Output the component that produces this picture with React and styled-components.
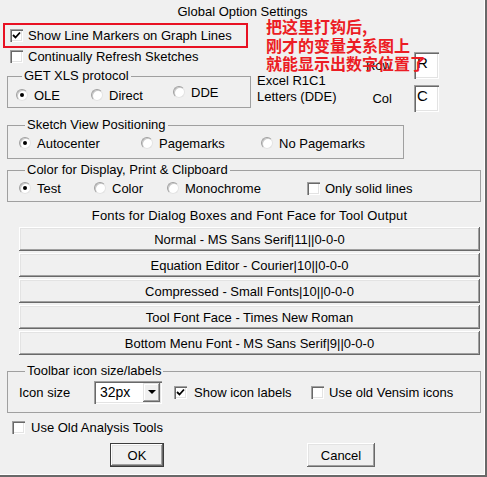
import React from "react";
import styled, { createGlobalStyle } from "styled-components";

const GlobalStyle = createGlobalStyle`
  html, body {
    margin: 0;
    padding: 0;
    background: #f0f0f0;
  }
  body {
    font-family: "Liberation Sans", Arial, sans-serif;
    font-size: 13px;
    color: #000;
  }
`;

const Window = styled.div`
  position: relative;
  box-sizing: border-box;
  width: 487px;
  height: 477px;
  background: #f0f0f0;
  border-right: 2px solid #696969;
  border-bottom: 2px solid #696969;
  box-shadow: inset -1px -1px 0 #fff;
  display: flex;
  flex-direction: column;
`;

const Title = styled.div`
  height: 23px;
  line-height: 24px;
  text-align: center;
`;

const TopSection = styled.div`
  display: flex;
  align-items: flex-start;
`;

const LeftCol = styled.div`
  width: 250px;
  display: flex;
  flex-direction: column;
`;

const Highlight = styled.div`
  box-sizing: border-box;
  margin-left: 3px;
  width: 245px;
  height: 25px;
  border: 2px solid #e81123;
  display: flex;
  align-items: center;
`;

const CheckRow = styled.div`
  display: flex;
  align-items: center;
  gap: ${(p) => p.$gap ?? 5}px;
  height: ${(p) => p.$h ?? 16}px;
  margin-left: ${(p) => p.$x ?? 0}px;
  margin-top: ${(p) => p.$top ?? 0}px;
`;

const Box = styled.span`
  box-sizing: border-box;
  flex: none;
  width: 13px;
  height: 13px;
  background: #fff;
  box-shadow: inset 1px 1px 0 #a0a0a0, inset 2px 2px 0 #696969,
    inset -1px -1px 0 #fff, inset -2px -2px 0 #e3e3e3;
  display: flex;
  align-items: center;
  justify-content: center;
`;

const Circle = styled.span`
  position: relative;
  box-sizing: border-box;
  flex: none;
  width: 12px;
  height: 12px;
  border-radius: 50%;
  background: #fff;
  border: 1px solid;
  border-color: #a0a0a0 #e3e3e3 #e3e3e3 #a0a0a0;
  box-shadow: inset 1px 1px 0 #c8c8c8;

  &::after {
    content: "";
    display: ${(p) => (p.$on ? "block" : "none")};
    position: absolute;
    left: 3px;
    top: 3px;
    width: 4px;
    height: 4px;
    border-radius: 50%;
    background: #000;
  }
`;

const Group = styled.fieldset`
  box-sizing: border-box;
  margin: ${(p) => p.$top}px 0 0 7px;
  width: ${(p) => p.$w}px;
  min-width: 0;
  padding: 0 0 ${(p) => p.$pb ?? 0}px ${(p) => p.$pl ?? 11}px;
  border: 1px solid #a0a0a0;
`;

const Legend = styled.legend`
  margin-left: 6px;
  padding: 0 2px;
  line-height: 14px;
`;

const Options = styled.div`
  display: flex;
  align-items: center;
  height: ${(p) => p.$h}px;
`;

const Option = styled.div`
  flex: none;
  display: flex;
  align-items: center;
  gap: ${(p) => p.$gap ?? 6}px;
  width: ${(p) => (p.$w ? `${p.$w}px` : "auto")};
  margin-left: ${(p) => p.$ml ?? 0}px;
  margin-bottom: ${(p) => (p.$lift ? p.$lift * 2 : 0)}px;
  white-space: nowrap;
`;

const ExcelNote = styled.div`
  margin: 50px 0 0 7px;
  width: 100px;
  line-height: 16px;
`;

const RowColGrid = styled.div`
  display: grid;
  grid-template-columns: 35px 25px;
  column-gap: 22px;
  row-gap: 6px;
  align-items: center;
  margin-top: 29px;
`;

const FieldLabel = styled.span`
  justify-self: end;
`;

const Field = styled.div`
  box-sizing: border-box;
  width: 25px;
  height: 27px;
  padding: 2px 0 0 3px;
  background: #fff;
  font-size: 15px;
  box-shadow: inset 1px 1px 0 #a0a0a0, inset 2px 2px 0 #696969,
    inset -1px -1px 0 #fff, inset -2px -2px 0 #e3e3e3;
`;

const Note = styled.div`
  position: absolute;
  left: 266px;
  top: 17px;
  color: #ec1c24;
  font-family: "Noto Sans CJK SC", sans-serif;
  font-weight: 700;
  font-size: 16px;
  line-height: 18.5px;
  white-space: nowrap;
`;

const SectionHeading = styled.div`
  margin: 4px 0 0 19px;
  width: 461px;
  line-height: 20px;
  text-align: center;
  letter-spacing: 0.15px;
`;

const ButtonStack = styled.div`
  display: flex;
  flex-direction: column;
  gap: 2px;
  margin: 1px 0 0 19px;
  width: 461px;
`;

const Button = styled.button`
  box-sizing: border-box;
  height: 24px;
  width: ${(p) => (p.$w ? `${p.$w}px` : "100%")};
  margin-left: ${(p) => p.$ml ?? 0}px;
  padding: 0;
  background: #f0f0f0;
  color: #000;
  font-family: inherit;
  font-size: 13px;
  border: ${(p) => (p.$default ? "1px solid #3c3c3c" : "none")};
  box-shadow: inset -1px -1px 0 #696969, inset 1px 1px 0 #fff,
    inset -2px -2px 0 #a0a0a0, inset 2px 2px 0 #e3e3e3;
`;

const Select = styled.div`
  box-sizing: border-box;
  flex: none;
  display: flex;
  align-items: center;
  justify-content: space-between;
  width: 68px;
  height: 23px;
  padding: 2px 2px 2px 6px;
  background: #fff;
  font-size: 14px;
  box-shadow: inset 1px 1px 0 #a0a0a0, inset 2px 2px 0 #696969,
    inset -1px -1px 0 #fff, inset -2px -2px 0 #e3e3e3;
`;

const DropButton = styled.span`
  box-sizing: border-box;
  width: 17px;
  height: 19px;
  background: #f0f0f0;
  display: flex;
  align-items: center;
  justify-content: center;
  box-shadow: inset -1px -1px 0 #696969, inset 1px 1px 0 #e3e3e3,
    inset -2px -2px 0 #a0a0a0, inset 2px 2px 0 #fff;

  &::after {
    content: "";
    border-left: 4px solid transparent;
    border-right: 4px solid transparent;
    border-top: 4px solid #000;
  }
`;

const DialogButtons = styled.div`
  display: flex;
  margin-top: 8px;
`;

function Checkbox({ checked }) {
  return (
    <Box>
      {checked && (
        <svg width="9" height="9" viewBox="0 0 9 9">
          <polyline points="1,4 3.5,6.5 8,1.5" fill="none" stroke="#000" strokeWidth="1.8" />
        </svg>
      )}
    </Box>
  );
}

function RadioOption({ label, on, w, lift }) {
  return (
    <Option $w={w} $lift={lift}>
      <Circle $on={on} />
      <span>{label}</span>
    </Option>
  );
}

const fontButtons = [
  "Normal - MS Sans Serif|11||0-0-0",
  "Equation Editor - Courier|10||0-0-0",
  "Compressed - Small Fonts|10||0-0-0",
  "Tool Font Face - Times New Roman",
  "Bottom Menu Font - MS Sans Serif|9||0-0-0",
];

export default function App() {
  return (
    <>
      <GlobalStyle />
      <Window>
        <Title>Global Option Settings</Title>

        <TopSection>
          <LeftCol>
            <Highlight>
              <CheckRow $x={5}>
                <Checkbox checked />
                <span>Show Line Markers on Graph Lines</span>
              </CheckRow>
            </Highlight>
            <CheckRow $x={10}>
              <Checkbox />
              <span>Continually Refresh Sketches</span>
            </CheckRow>
            <Group $top={5} $w={244} $pl={8}>
              <Legend>GET XLS protocol</Legend>
              <Options $h={24}>
                <RadioOption label="OLE" on w={75} />
                <RadioOption label="Direct" w={82} />
                <RadioOption label="DDE" lift={3} />
              </Options>
            </Group>
          </LeftCol>
          <ExcelNote>
            Excel R1C1
            <br />
            Letters (DDE)
          </ExcelNote>
          <RowColGrid>
            <FieldLabel>Row</FieldLabel>
            <Field>R</Field>
            <FieldLabel>Col</FieldLabel>
            <Field>C</Field>
          </RowColGrid>
        </TopSection>

        <Group $top={6} $w={397} $pb={4}>
          <Legend>Sketch View Positioning</Legend>
          <Options $h={22}>
            <RadioOption label="Autocenter" on w={122} />
            <RadioOption label="Pagemarks" w={120} />
            <RadioOption label="No Pagemarks" />
          </Options>
        </Group>

        <Group $top={4} $w={474} $pb={2}>
          <Legend>Color for Display, Print &amp; Clipboard</Legend>
          <Options $h={22}>
            <RadioOption label="Test" on w={75} />
            <RadioOption label="Color" w={73} />
            <RadioOption label="Monochrome" w={140} />
            <Option $gap={5}>
              <Checkbox />
              <span>Only solid lines</span>
            </Option>
          </Options>
        </Group>

        <SectionHeading>Fonts for Dialog Boxes and Font Face for Tool Output</SectionHeading>
        <ButtonStack>
          {fontButtons.map((label) => (
            <Button key={label}>{label}</Button>
          ))}
        </ButtonStack>

        <Group $top={9} $w={474} $pb={6}>
          <Legend>Toolbar icon size/labels</Legend>
          <Options $h={28}>
            <Option $w={75}>Icon size</Option>
            <Select>
              <span>32px</span>
              <DropButton />
            </Select>
            <Option $w={137} $ml={12} $gap={7}>
              <Checkbox checked />
              <span>Show icon labels</span>
            </Option>
            <Option $gap={5}>
              <Checkbox />
              <span>Use old Vensim icons</span>
            </Option>
          </Options>
        </Group>

        <CheckRow $x={12} $top={6} $gap={6}>
          <Checkbox />
          <span>Use Old Analysis Tools</span>
        </CheckRow>

        <DialogButtons>
          <Button $default $w={54} $ml={110}>
            OK
          </Button>
          <Button $w={68} $ml={143}>
            Cancel
          </Button>
        </DialogButtons>

        <Note>
          把这里打钩后,
          <br />
          刚才的变量关系图上
          <br />
          就能显示出数字位置了
        </Note>
      </Window>
    </>
  );
}
